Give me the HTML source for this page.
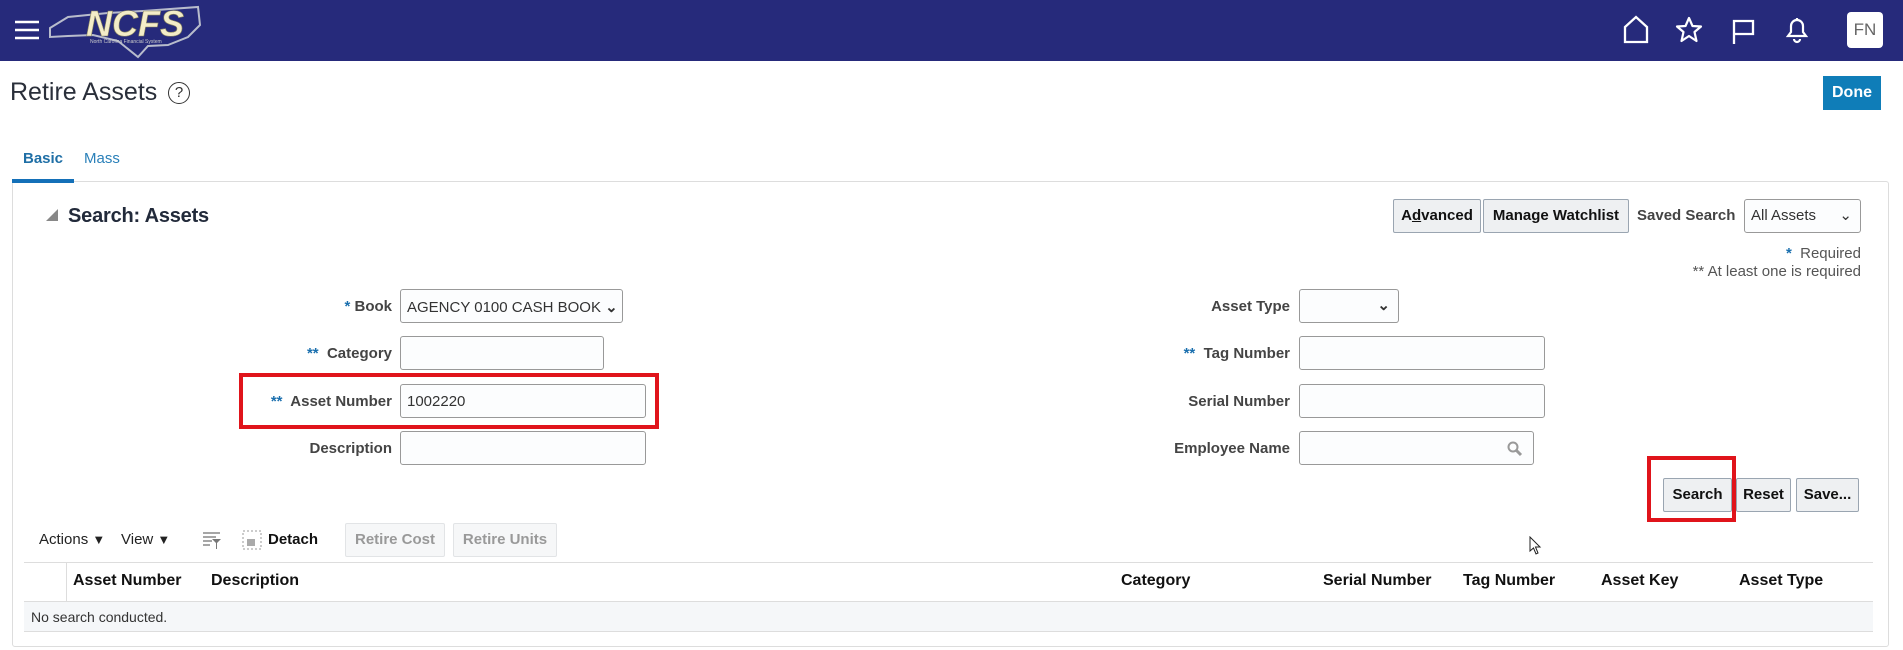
<!DOCTYPE html>
<html><head><meta charset="utf-8"><style>
*{box-sizing:border-box;margin:0;padding:0}
body{width:1903px;height:650px;position:relative;background:#fff;font-family:"Liberation Sans",Arial,sans-serif;color:#333;overflow:hidden}
.a{position:absolute}
.hdr{left:0;top:0;width:1903px;height:61px;background:#262a7b}
.lbl{position:absolute;font-size:15px;font-weight:bold;color:#444;text-align:right;white-space:nowrap}
.st{color:#1a6fae;font-weight:bold}
.inp{position:absolute;border:1px solid #999;border-radius:3px;background:#fcfdfe;height:34px;font-size:15px;padding:8px 6px;color:#333;white-space:nowrap}
.btn{position:absolute;border:1px solid #9aa5b1;background:#eef0f2;font-weight:bold;font-size:15px;color:#111;text-align:center;line-height:32px;border-radius:2px}
.dis{position:absolute;border:1px solid #e2e4e6;background:#f6f7f8;color:#999;font-weight:bold;font-size:15px;text-align:center;line-height:32px;border-radius:2px}
.th{position:absolute;top:572px;font-weight:bold;font-size:16px;color:#111}
.red{position:absolute;border:4px solid #e0141b}
</style></head><body>
<div class="a hdr"></div>
<svg class="a" style="left:15px;top:19px" width="26" height="22"><g stroke="#fff" stroke-width="2.5"><line x1="0" y1="3" x2="24" y2="3"/><line x1="0" y1="11" x2="24" y2="11"/><line x1="0" y1="19" x2="24" y2="19"/></g></svg>
<svg class="a" style="left:48px;top:3px" width="155" height="56"><path d="M2 25 L20 14 L60 10 L95 8 L150 4 L152 22 L140 34 L120 42 L100 43 L90 54 L70 38 L45 32 L20 33 L2 34Z" fill="none" stroke="#b8bccc" stroke-width="2"/><text x="38" y="33" font-family="Liberation Sans" font-weight="bold" font-style="italic" font-size="36" fill="#f3ecc8" stroke="#8a8660" stroke-width="0.6">NCFS</text><text x="42" y="40" font-size="5" fill="#ccc" font-family="Liberation Sans">North Carolina Financial System</text></svg>
<svg class="a" style="left:1622px;top:15px" width="28" height="30"><path d="M3 27 V12 L14 2 L25 12 V27Z" fill="none" stroke="#fff" stroke-width="2.3"/></svg>
<svg class="a" style="left:1675px;top:16px" width="28" height="28"><path d="M14 2 L17.5 10 L26 10.5 L19.5 16 L21.5 25 L14 20 L6.5 25 L8.5 16 L2 10.5 L10.5 10Z" fill="none" stroke="#fff" stroke-width="2.2" stroke-linejoin="round"/></svg>
<svg class="a" style="left:1731px;top:17px" width="26" height="28"><path d="M3 27 V4 H22 V17 H3" fill="none" stroke="#fff" stroke-width="2.3"/></svg>
<svg class="a" style="left:1784px;top:15px" width="26" height="30"><path d="M4 21 H22 L19 17 V11 A6 6 0 0 0 7 11 V17Z M13 3 V5 M10 24 A3 3 0 0 0 16 24" fill="none" stroke="#fff" stroke-width="2.2"/></svg>
<div class="a" style="left:1847px;top:12px;width:36px;height:36px;background:#fff;border-radius:4px;color:#666;font-size:17px;text-align:center;line-height:36px">FN</div>

<div class="a" style="left:10px;top:78px;font-size:25px;color:#2a2f3a">Retire Assets</div>
<div class="a" style="left:168px;top:82px;width:22px;height:22px;border:1.6px solid #333;border-radius:50%;font-size:15px;text-align:center;line-height:19px;color:#333">?</div>
<div class="a" style="left:1823px;top:76px;width:58px;height:34px;background:#0f7db8;color:#fff;font-weight:bold;font-size:16px;text-align:center;line-height:34px">Done</div>

<div class="a" style="left:23px;top:150px;font-size:15px;font-weight:bold;color:#1f6fa6">Basic</div>
<div class="a" style="left:84px;top:150px;font-size:15px;color:#2a80b9">Mass</div>
<div class="a" style="left:12px;top:181px;width:1877px;height:466px;border:1px solid #ddd;border-radius:3px"></div>
<div class="a" style="left:12px;top:179px;width:62px;height:4px;background:#1470b8"></div>

<svg class="a" style="left:46px;top:209px" width="12" height="12"><path d="M12 0 V12 H0Z" fill="#888"/></svg>
<div class="a" style="left:68px;top:205px;font-size:20px;font-weight:bold;color:#222a3a;letter-spacing:-0.2px">Search: Assets</div>

<div class="btn" style="left:1393px;top:199px;width:88px;height:34px">A<u>d</u>vanced</div>
<div class="btn" style="left:1483px;top:199px;width:146px;height:34px">Manage Watchlist</div>
<div class="lbl" style="left:1637px;top:207px">Saved Search</div>
<div class="inp" style="left:1744px;top:199px;width:117px;height:34px;padding:7px 6px">All Assets<span style="position:absolute;right:8px;top:6px">⌄</span></div>
<div class="a" style="left:1500px;top:245px;width:361px;text-align:right;font-size:15px;color:#555;line-height:18px"><span class="st">*</span>&nbsp; Required<br>** At least one is required</div>

<div class="lbl" style="right:1511px;top:298px"><span class="st">*</span> Book</div>
<div class="inp" style="left:400px;top:289px;width:223px">AGENCY 0100 CASH BOOK <span style="font-weight:bold">⌄</span></div>
<div class="lbl" style="right:1511px;top:345px"><span class="st">**</span>&nbsp; Category</div>
<div class="inp" style="left:400px;top:336px;width:204px"></div>
<div class="lbl" style="right:1511px;top:393px"><span class="st">**</span>&nbsp; Asset Number</div>
<div class="inp" style="left:400px;top:384px;width:246px">1002220</div>
<div class="lbl" style="right:1511px;top:440px">Description</div>
<div class="inp" style="left:400px;top:431px;width:246px"></div>
<div class="red" style="left:239px;top:373px;width:420px;height:56px"></div>

<div class="lbl" style="right:613px;top:298px">Asset Type</div>
<div class="inp" style="left:1299px;top:289px;width:100px"><span style="position:absolute;right:8px;top:6px;font-weight:bold">⌄</span></div>
<div class="lbl" style="right:613px;top:345px"><span class="st">**</span>&nbsp; Tag Number</div>
<div class="inp" style="left:1299px;top:336px;width:246px"></div>
<div class="lbl" style="right:613px;top:393px">Serial Number</div>
<div class="inp" style="left:1299px;top:384px;width:246px"></div>
<div class="lbl" style="right:613px;top:440px">Employee Name</div>
<div class="inp" style="left:1299px;top:431px;width:235px"><svg style="position:absolute;right:10px;top:9px" width="16" height="16"><circle cx="6" cy="6" r="4.5" fill="none" stroke="#999" stroke-width="2"/><line x1="9.5" y1="9.5" x2="14" y2="14" stroke="#999" stroke-width="3"/></svg></div>

<div class="btn" style="left:1663px;top:478px;width:69px;height:34px">Search</div>
<div class="btn" style="left:1736px;top:478px;width:55px;height:34px">Reset</div>
<div class="btn" style="left:1796px;top:478px;width:63px;height:34px">Save...</div>
<div class="red" style="left:1647px;top:456px;width:89px;height:66px"></div>

<div class="a" style="left:39px;top:531px;font-size:15px;color:#222">Actions <span style="font-size:13px">▼</span></div>
<div class="a" style="left:121px;top:531px;font-size:15px;color:#222">View <span style="font-size:13px">▼</span></div>
<svg class="a" style="left:202px;top:530px" width="20" height="20"><g stroke="#888" stroke-width="1.5"><line x1="1" y1="3" x2="18" y2="3"/><line x1="1" y1="7" x2="14" y2="7"/><line x1="1" y1="11" x2="10" y2="11"/><line x1="1" y1="15" x2="8" y2="15"/></g><path d="M10 9 H19 L15 13 V19 H14 V13Z" fill="#777"/></svg>
<svg class="a" style="left:242px;top:530px" width="20" height="20"><rect x="1" y="1" width="18" height="18" fill="none" stroke="#999" stroke-dasharray="2 2"/><rect x="5" y="9" width="8" height="7" fill="#aaa"/></svg>
<div class="a" style="left:268px;top:531px;font-size:15px;font-weight:bold;color:#111">Detach</div>
<div class="dis" style="left:345px;top:523px;width:100px;height:34px">Retire Cost</div>
<div class="dis" style="left:453px;top:523px;width:104px;height:34px">Retire Units</div>

<div class="a" style="left:24px;top:562px;width:1849px;height:1px;background:#ddd"></div>
<div class="a" style="left:66px;top:562px;width:1px;height:39px;background:#ddd"></div>
<div class="a" style="left:24px;top:601px;width:1849px;height:31px;background:#f5f7f9;border-top:1px solid #ddd;border-bottom:1px solid #ddd"></div>
<div class="th" style="left:73px">Asset Number</div>
<div class="th" style="left:211px">Description</div>
<div class="th" style="left:1121px">Category</div>
<div class="th" style="left:1323px">Serial Number</div>
<div class="th" style="left:1463px">Tag Number</div>
<div class="th" style="left:1601px">Asset Key</div>
<div class="th" style="left:1739px">Asset Type</div>
<div class="a" style="left:31px;top:609px;font-size:14px;color:#333">No search conducted.</div>
<svg class="a" style="left:1529px;top:536px" width="14" height="20"><path d="M1 1 V15 L4.5 12 L7 18 L9 17 L6.5 11 H11Z" fill="#fff" stroke="#222" stroke-width="1"/></svg>
</body></html>
